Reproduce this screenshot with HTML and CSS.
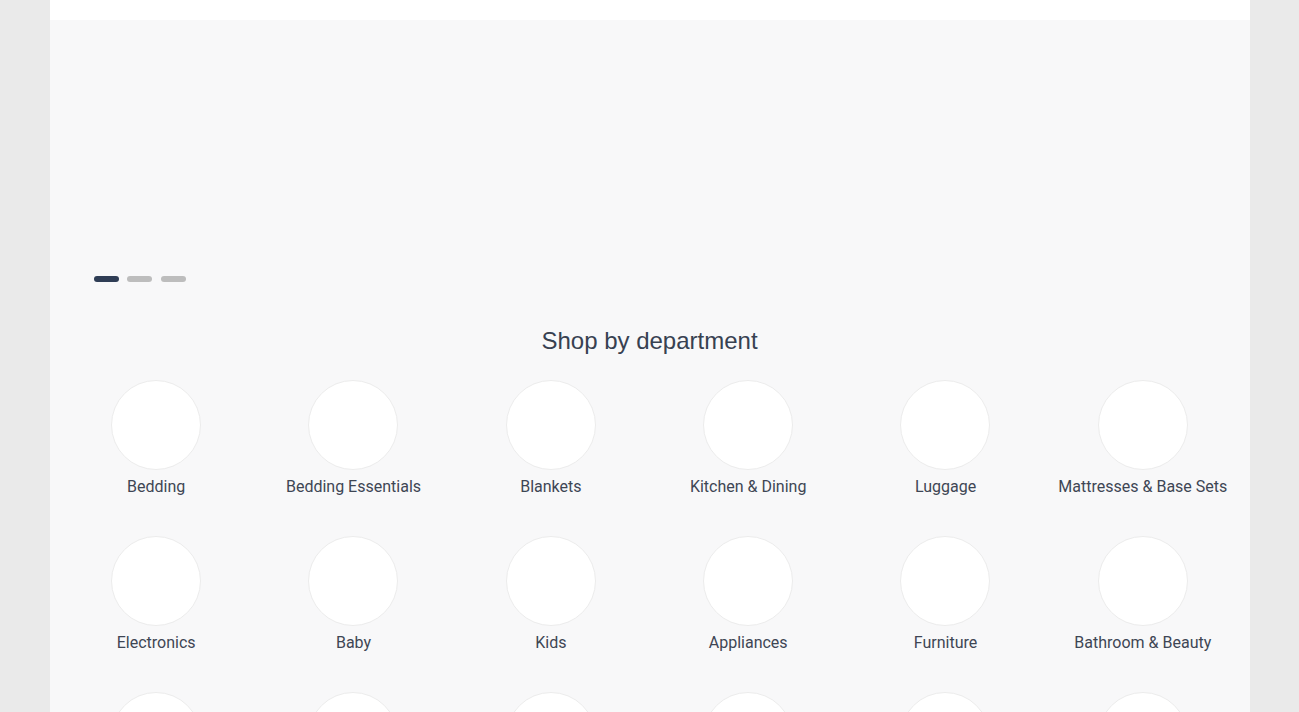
FILE: index.html
```html
<!DOCTYPE html>
<html lang="en">
<head>
  <meta charset="UTF-8">
  <title>Shop by department</title>
  <link rel="stylesheet" href="styles.css">
</head>
<body>
  <div class="page">
    <div class="topbar"></div>
    <main class="content">
      <div class="hero"></div>
      <div class="dots">
        <span class="dot active"></span>
        <span class="dot"></span>
        <span class="dot"></span>
      </div>

      <h2 class="title">Shop by department</h2>

      <div class="departments">
        <a class="dept" href="#"><span class="circle"></span><span class="name">Bedding</span></a>
        <a class="dept" href="#"><span class="circle"></span><span class="name">Bedding Essentials</span></a>
        <a class="dept" href="#"><span class="circle"></span><span class="name">Blankets</span></a>
        <a class="dept" href="#"><span class="circle"></span><span class="name">Kitchen &amp; Dining</span></a>
        <a class="dept" href="#"><span class="circle"></span><span class="name">Luggage</span></a>
        <a class="dept" href="#"><span class="circle"></span><span class="name">Mattresses &amp; Base Sets</span></a>
        <a class="dept" href="#"><span class="circle"></span><span class="name">Electronics</span></a>
        <a class="dept" href="#"><span class="circle"></span><span class="name">Baby</span></a>
        <a class="dept" href="#"><span class="circle"></span><span class="name">Kids</span></a>
        <a class="dept" href="#"><span class="circle"></span><span class="name">Appliances</span></a>
        <a class="dept" href="#"><span class="circle"></span><span class="name">Furniture</span></a>
        <a class="dept" href="#"><span class="circle"></span><span class="name">Bathroom &amp; Beauty</span></a>
        <a class="dept" href="#"><span class="circle"></span><span class="name">Home Decor</span></a>
        <a class="dept" href="#"><span class="circle"></span><span class="name">Lighting</span></a>
        <a class="dept" href="#"><span class="circle"></span><span class="name">Outdoor</span></a>
        <a class="dept" href="#"><span class="circle"></span><span class="name">Storage</span></a>
        <a class="dept" href="#"><span class="circle"></span><span class="name">Rugs</span></a>
        <a class="dept" href="#"><span class="circle"></span><span class="name">Pets</span></a>
      </div>
    </main>
  </div>
</body>
</html>
```

FILE: styles.css
```css
body {
  margin: 0;
  background: #eaeaea;
  font-family: Roboto, "Liberation Sans", Arial, sans-serif;
}

.page {
  width: 1200px;
  margin: 0 auto;
  min-height: 100vh;
  background: #f8f8f9;
}

.topbar {
  height: 20px;
  background: #ffffff;
}

.content {
  padding: 0 8px 40px;
}

.hero {
  height: 256px;
}

.dots {
  display: flex;
  gap: 8.5px;
  padding-left: 36px;
}

.dot {
  width: 25px;
  height: 6px;
  border-radius: 3px;
  background: #bdbdbd;
}

.dot.active {
  background: #2f3d55;
}

.title {
  margin: 44px 0 25px;
  font-family: "Liberation Sans", Arial, sans-serif;
  font-size: 24px;
  font-weight: normal;
  line-height: 29px;
  text-align: center;
  color: #374151;
}

.departments {
  display: grid;
  grid-template-columns: repeat(6, 1fr);
  row-gap: 40px;
}

.dept {
  display: flex;
  flex-direction: column;
  align-items: center;
  text-decoration: none;
}

.circle {
  width: 90px;
  height: 90px;
  box-sizing: border-box;
  border-radius: 50%;
  background: #ffffff;
  border: 1px solid #ececec;
}

.name {
  margin-top: 7px;
  font-size: 16px;
  line-height: 19px;
  color: #3e4654;
  white-space: nowrap;
}
```
